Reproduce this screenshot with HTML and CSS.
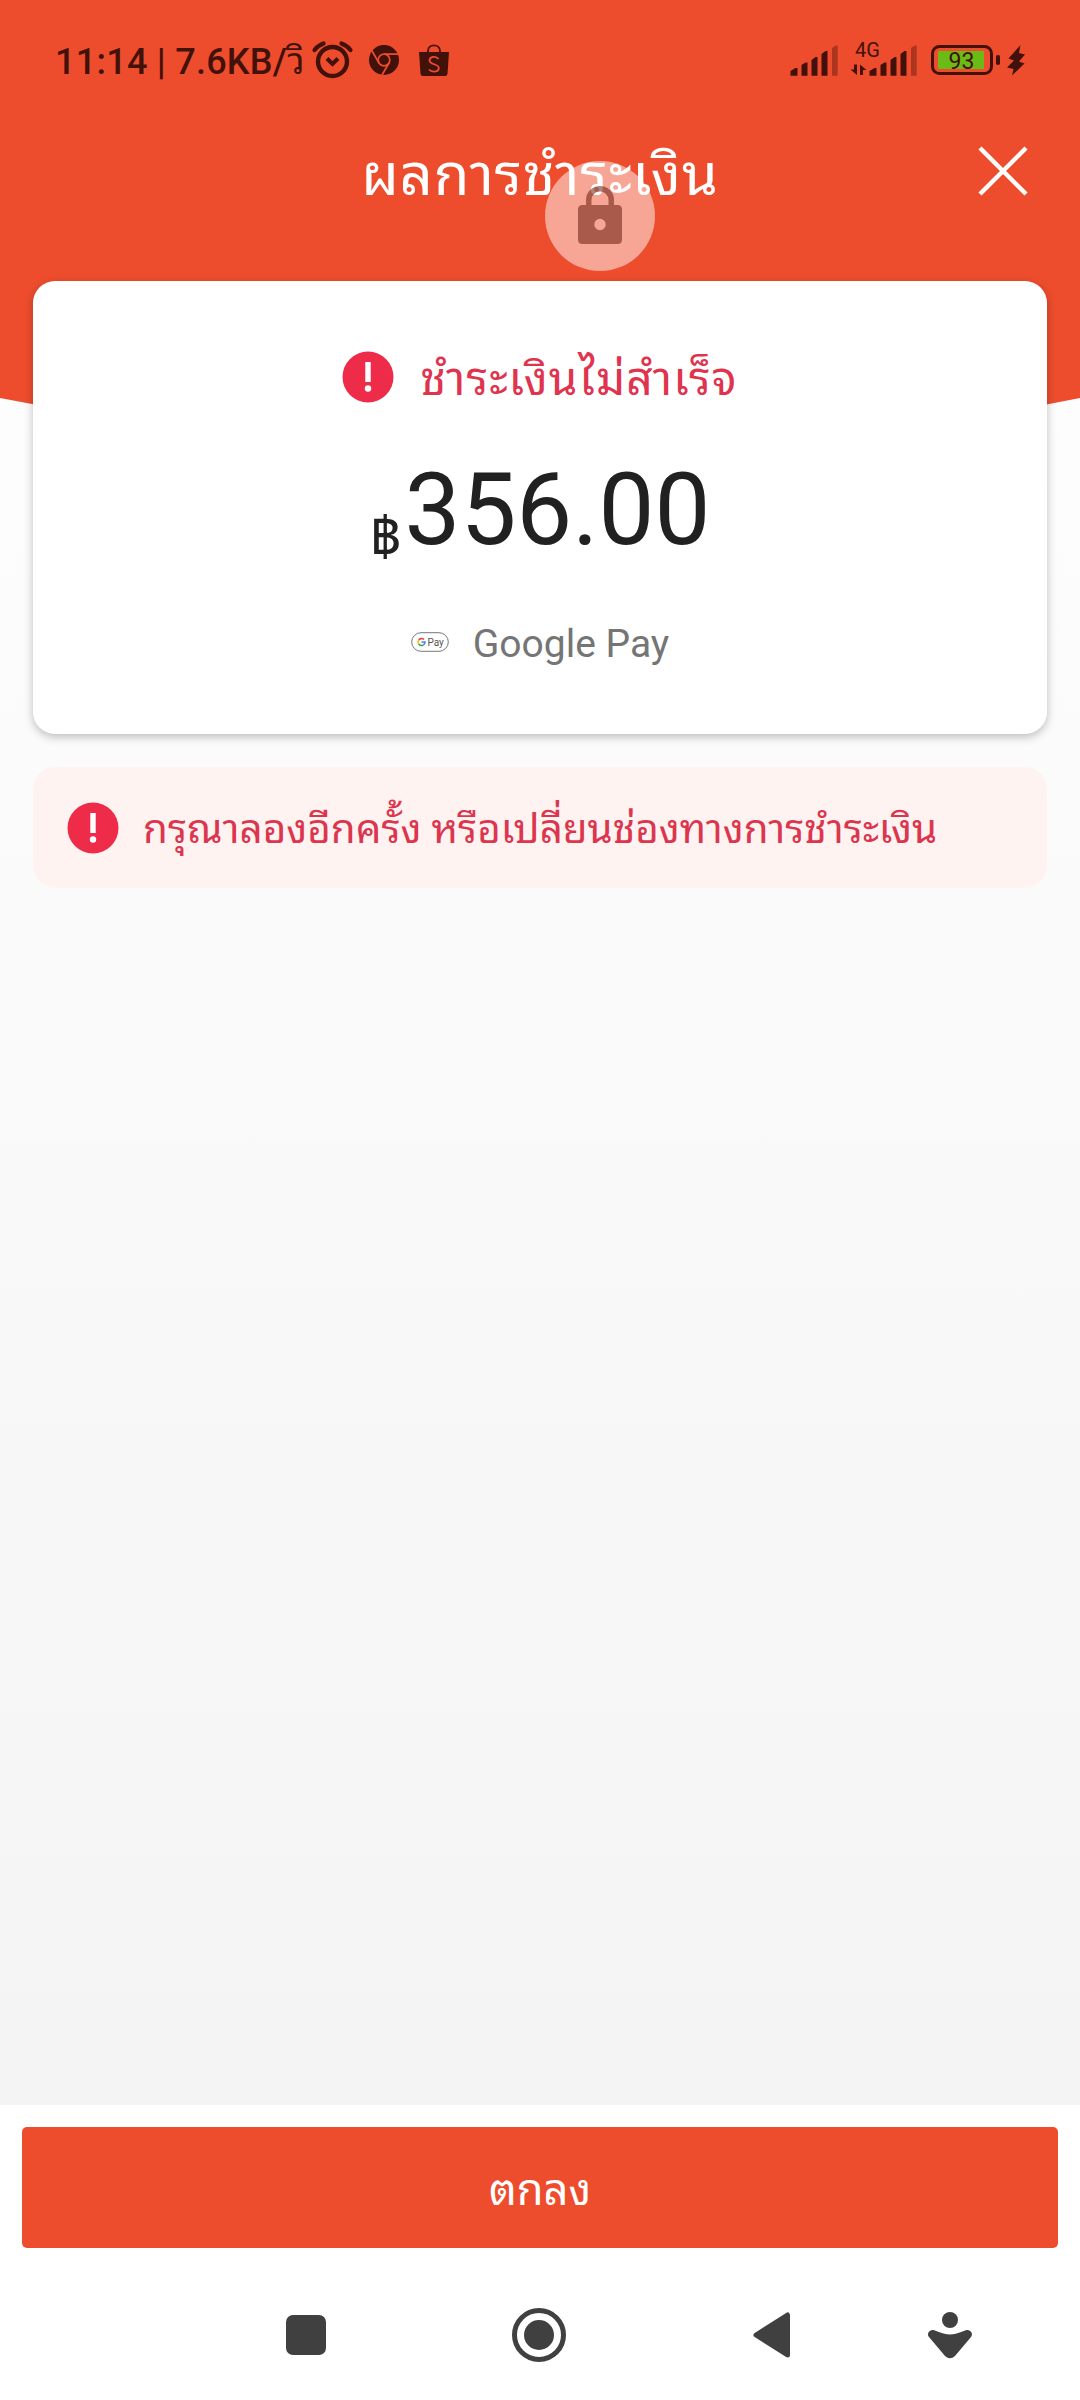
FILE: index.html
```html
<!DOCTYPE html>
<html lang="th">
<head>
<meta charset="utf-8">
<title>ผลการชำระเงิน</title>
<link rel="stylesheet" href="styles.css">
</head>
<body>
<div class="screen">
  <header class="top">
    <svg class="top-bg" width="1080" height="460" viewBox="0 0 1080 460"><path d="M0 0H1080V398Q540 506 0 398Z" fill="#ee4d2d"/></svg>
    <div class="status">
      <span class="status-text">11:14 | 7.6KB/<span class="unit">วิ</span></span>
      <svg class="status-left" width="140" height="44" viewBox="312 38 140 44" fill="none" stroke="#42110a">
        <circle cx="332.5" cy="61.5" r="14.5" stroke-width="4.4"/>
        <path d="M327 58.500L332.500 64L338 58.500" stroke-width="4"/>
        <path d="M314.500 50Q318 45.500 323.500 43.500M350.500 50Q347 45.500 341.500 43.500" stroke-width="4.200" stroke-linecap="round"/>
        <circle cx="384" cy="60" r="15" fill="#42110a" stroke="none"/>
        <g stroke="#ee4d2d" stroke-width="1.700"><circle cx="384" cy="60" r="5.800"/><path d="M384 54.200H398M379 63L371.500 50M389 63L382 75"/></g>
        <path d="M419 52H449L447.500 74Q447.300 76 445 76H423Q420.700 76 420.500 74Z" fill="#42110a" stroke="none"/>
        <path d="M428 53V51C428 43.500 440 43.500 440 51V53" stroke-width="1.800"/>
        <path d="M438.500 59C436 55.500 429.500 56.500 429.500 60.500C429.500 65 438.800 63.500 438.800 68C438.800 72.500 431.500 72.500 429 69.500" stroke="#ee4d2d" stroke-width="1.800"/>
      </svg>
      <svg class="status-right" width="240" height="44" viewBox="788 38 240 44" fill="#42110a">
        <g id="bars"><path d="M790.500 71L795.500 68H797.500V75.700H790.500ZM801.500 65L805.500 62.500H807.500V75.700H801.500ZM811.500 60L815.500 57H817.500V75.700H811.500ZM821.500 54L825.500 51H827.500V75.700H821.500Z"/><path d="M832 48L836 45.500H837.700V75.700H832Z" opacity=".38"/></g>
        <use href="#bars" x="79"/>
        <text x="855" y="57" class="net">4G</text>
        <path d="M854 64.500H857V75L850.500 69.500H854ZM860 75V64.500L866.500 70H863V75Z"/>
        <rect x="932.500" y="46.500" width="59" height="27" rx="7" fill="none" stroke="#42110a" stroke-width="3"/>
        <rect x="938" y="51" width="46" height="18" rx="1" fill="#6bbb16"/>
        <rect x="996" y="55" width="4" height="10" rx="1.800"/>
        <text x="961.500" y="68.500" class="battery">93</text>
        <path d="M1020.500 45L1008.500 58.500L1014 60.500L1007 67.500L1013.500 69L1012 75.500L1024.500 63.500L1019 61.500L1025 54.500L1019 53Z"/>
      </svg>
    </div>
    <div class="bar">
      <h1 class="title">ผลการชำระเงิน</h1>
      <svg class="close" width="52" height="52" viewBox="977 145 52 52"><path d="M980 148L1026 194M1026 148L980 194" stroke="#fff" stroke-width="4.400"/></svg>
      <svg class="lock" width="110" height="110" viewBox="545 161 110 110"><circle cx="600" cy="216" r="55" fill="#fff" fill-opacity=".5"/><path fill="#5d0e00" fill-opacity=".5" fill-rule="evenodd" d="M586 205V200A14 14 0 0 1 614 200V205H617.500Q622 205 622 209.500V239.500Q622 244 617.500 244H582.500Q578 244 578 239.500V209.500Q578 205 582.500 205ZM591.500 205H608.500V200A8.500 8.500 0 0 0 591.500 200ZM605.700 224.500A5.700 5.700 0 1 0 594.300 224.500A5.700 5.700 0 1 0 605.700 224.500Z"/></svg>
    </div>
  </header>
  <main class="content">
    <section class="card">
      <div class="result">
        <svg width="52" height="52" viewBox="0 0 52 52"><circle cx="26" cy="26" r="25.500" fill="#ee2c4a"/><path d="M23.300 11H28.700V31H23.300Z" fill="#fff"/><circle cx="26" cy="37.500" r="3.200" fill="#fff"/></svg>
        <span class="result-text">ชำระเงินไม่สำเร็จ</span>
      </div>
      <div class="amount"><span class="baht">฿</span><span class="sum">356.00</span></div>
      <div class="method">
        <svg width="38" height="20" viewBox="0 0 38 20" fill="none"><rect x=".7" y=".7" width="36.600" height="18.600" rx="9.300" stroke="#777" stroke-width="1"/><g stroke-width="1.600"><path d="M13 7.500A3.600 3.600 0 0 0 7.700 8" stroke="#ea4335"/><path d="M7.700 8A3.600 3.600 0 0 0 7.700 12" stroke="#fbbc04"/><path d="M7.700 12A3.600 3.600 0 0 0 12.500 12.800" stroke="#34a853"/><path d="M12.500 12.800A3.600 3.600 0 0 0 14 10H10.500" stroke="#4285f4"/></g><text x="16.500" y="13.500" class="gpay">Pay</text></svg>
        <span class="method-name">Google Pay</span>
      </div>
    </section>
    <section class="alert">
      <svg width="52" height="52" viewBox="0 0 52 52"><circle cx="26" cy="26" r="25.500" fill="#ee2c4a"/><path d="M23.300 11H28.700V31H23.300Z" fill="#fff"/><circle cx="26" cy="37.500" r="3.200" fill="#fff"/></svg>
      <span class="alert-text">กรุณาลองอีกครั้ง หรือเปลี่ยนช่องทางการชำระเงิน</span>
    </section>
  </main>
  <footer class="footer">
    <button class="ok"><span class="ok-text">ตกลง</span></button>
  </footer>
  <nav class="nav">
    <svg width="40" height="40" viewBox="0 0 40 40"><rect width="40" height="40" rx="7" fill="#404040"/></svg>
    <svg width="54" height="54" viewBox="0 0 54 54"><circle cx="27" cy="27" r="24.500" fill="none" stroke="#404040" stroke-width="5"/><circle cx="27" cy="27" r="15" fill="#404040"/></svg>
    <svg width="38" height="48" viewBox="0 0 38 48"><path d="M3 24L34.500 4V44Z" fill="#404040" stroke="#404040" stroke-width="5" stroke-linejoin="round"/></svg>
    <svg width="44" height="48" viewBox="0 0 44 48"><circle cx="22" cy="9" r="8" fill="#404040"/><path d="M5.500 19Q17 23.500 22 23.500T38.500 19C43 18.500 45.500 23 43 26L27 45Q22 49.500 17 45L1 26C-1.500 23 1 18.500 5.500 19Z" fill="#404040"/></svg>
  </nav>
</div>
</body>
</html>
```
FILE: styles.css
```css
* { box-sizing: border-box; }
body { margin: 0; font-family: Roboto, "Noto Sans Thai Looped", "Noto Sans Thai", "Loma", "Noto Sans", sans-serif; }
svg { display: block; flex: none; overflow: visible; }
.screen { width: 1080px; height: 2400px; display: flex; flex-direction: column; background: linear-gradient(#fdfdfd 400px, #f4f4f4 2104px); }
.top { position: relative; height: 281px; display: flex; flex-direction: column; }
.top-bg { position: absolute; left: 0; top: 0; }
.status { position: relative; height: 120px; padding: 38px 52px 0 55px; display: flex; align-items: flex-start; }
.status-text { width: 257px; font-size: 36px; font-weight: 500; line-height: 48px; letter-spacing: .25px; white-space: nowrap; color: #42110a; }
.unit { font-weight: 400; }
.status-right { margin-left: auto; }
.net { font-size: 20px; }
.battery { font-size: 23px; text-anchor: middle; }
.bar { position: relative; height: 161px; display: grid; grid-template-columns: 1fr auto 1fr; align-items: start; padding: 0 51px; }
.title { grid-column: 2; margin: 15px 0 0; font-size: 58px; font-weight: 400; line-height: 80px; letter-spacing: .8px; color: #fff; white-space: nowrap; }
.close { justify-self: end; margin-top: 25px; }
.lock { position: absolute; left: 545px; top: 41px; }
.content { position: relative; flex: 1; padding: 0 33px; display: flex; flex-direction: column; gap: 33px; }
.card { height: 453px; border-radius: 22px; background: #fff; box-shadow: 0 3px 10px rgba(0,0,0,.25); display: flex; flex-direction: column; align-items: center; padding-top: 61px; }
.result { height: 70px; display: flex; align-items: center; gap: 26px; color: #e0334e; }
.result-text { font-size: 46px; line-height: 70px; letter-spacing: 1.1px; margin-top: 4px; white-space: nowrap; }
.amount { height: 144px; margin-top: 38px; display: flex; align-items: baseline; gap: 4px; color: #212121; }
.baht { font-size: 54px; position: relative; top: 12px; }
.sum { font-size: 99.5px; line-height: 120px; }
.method { display: flex; align-items: center; gap: 24px; color: #757575; height: 60px; margin-top: 20px; }
.method svg { margin-top: -4px; }
.method-name { font-size: 39px; line-height: 60px; }
.gpay { font-size: 10px; fill: #555; }
.alert { height: 121px; border-radius: 22px; background: #fff3f2; display: flex; align-items: center; gap: 24px; padding: 0 34px; color: #dc364f; }
.alert-text { font-size: 40.4px; line-height: 60px; margin-top: 4px; white-space: nowrap; }
.footer { height: 143px; background: #fff; padding: 22px 22px 0; }
.ok { width: 100%; height: 121px; padding: 6px 0 0; border: 0; border-radius: 5px; background: #ee4d2d; color: #fff; font: inherit; font-size: 43.5px; line-height: 60px; }
.nav { height: 152px; background: #fff; display: grid; grid-template-columns: 233px 233px 232px 125px; align-items: center; justify-items: center; padding: 22px 0 0 189.5px; }
```
